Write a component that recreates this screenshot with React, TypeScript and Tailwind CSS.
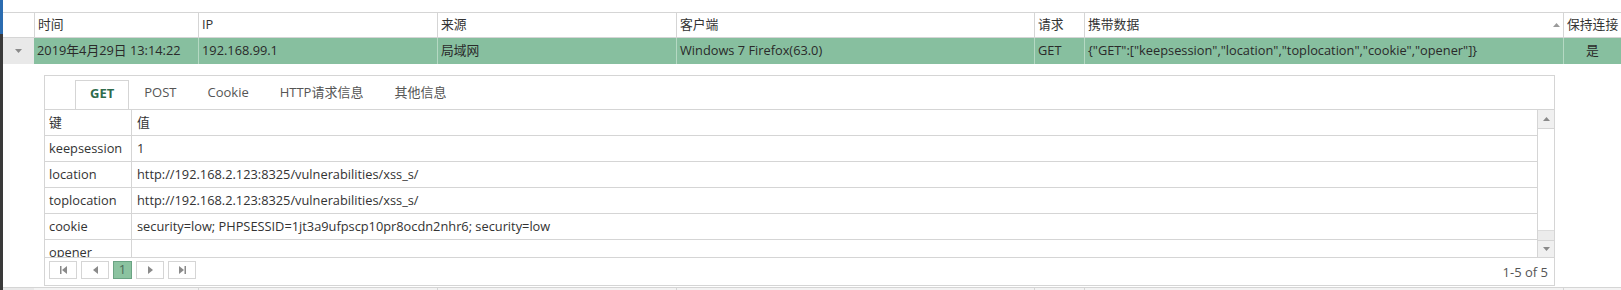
const font = { fontFamily: '"Open Sans", "Noto Sans CJK SC", sans-serif' };

const columns = ['时间', 'IP', '来源', '客户端', '请求', '携带数据', '保持连接'];
const gridCols = 'grid grid-cols-[31px_164px_239px_239px_358px_50px_479px_1fr]';

const detailRows = [
  ['keepsession', '1'],
  ['location', 'http://192.168.2.123:8325/vulnerabilities/xss_s/'],
  ['toplocation', 'http://192.168.2.123:8325/vulnerabilities/xss_s/'],
  ['cookie', 'security=low; PHPSESSID=1jt3a9ufpscp10pr8ocdn2nhr6; security=low'],
  ['opener', ''],
];

const tabs = ['GET', 'POST', 'Cookie', 'HTTP请求信息', '其他信息'];

function PagerButton({ children }: { children: React.ReactNode }) {
  return (
    <div className="w-[28px] h-[18px] border border-[#d5d5d5] bg-white flex items-center justify-center text-[#7a7a7a]">
      {children}
    </div>
  );
}

function DetailPanel() {
  return (
    <div className="border border-[#d5d5d5] bg-white h-[211px] flex flex-col">
      {/* Tabs */}
      <div className="h-[33px] flex items-end pl-[30px]">
        {tabs.map((t, i) => (
          <div
            key={t}
            className={
              i === 0
                ? 'h-[29px] px-[14px] pb-[3px] flex items-center border border-b-0 border-[#d5d5d5] bg-white font-bold text-[#2f6b4c] text-[13px]'
                : 'h-[29px] px-[15px] pb-[3px] flex items-center text-[#555] text-[13px] mr-[1px]'
            }
          >
            {t}
          </div>
        ))}
      </div>

      {/* Grid */}
      <div className="flex border-t border-[#d5d5d5] h-[148px]">
        <div className="flex-1 flex flex-col overflow-hidden">
          <div className="flex h-[26px] border-b border-[#d5d5d5] shrink-0">
            <div className="w-[87px] pl-[4px] flex items-center border-r border-[#d5d5d5]">键</div>
            <div className="flex-1 pl-[5px] flex items-center">值</div>
          </div>
          {detailRows.map(([k, v]) => (
            <div key={k} className="flex h-[26px] border-b border-[#d5d5d5] shrink-0">
              <div className="w-[87px] pl-[4px] flex items-center border-r border-[#d5d5d5]">{k}</div>
              <div className="flex-1 pl-[5px] flex items-center">{v}</div>
            </div>
          ))}
        </div>
        {/* Scrollbar */}
        <div className="w-[17px] border-l border-[#d5d5d5] flex flex-col bg-[#f7f7f7]">
          <div className="h-[19px] flex items-center justify-center border-b border-[#d5d5d5] bg-[#f0f0f0]">
            <svg width="7" height="4" viewBox="0 0 7 4"><path d="M0 4 L3.5 0 L7 4 Z" fill="#8a8a8a" /></svg>
          </div>
          <div className="h-[102px] bg-white border-b border-[#dcdcdc]"></div>
          <div className="flex-1 bg-[#ececec]"></div>
          <div className="h-[17px] flex items-center justify-center border-t border-[#d5d5d5] bg-[#f0f0f0]">
            <svg width="7" height="4" viewBox="0 0 7 4"><path d="M0 0 L3.5 4 L7 0 Z" fill="#8a8a8a" /></svg>
          </div>
        </div>
      </div>

      {/* Pager */}
      <div className="flex-1 border-t border-[#d5d5d5] flex items-start pt-[3px] pl-[4px] pr-[6px]">
        <div className="flex gap-[4px]">
          <PagerButton>
            <svg width="7" height="8" viewBox="0 0 7 8"><rect x="0" y="0" width="1.5" height="8" fill="#8a8a8a" /><path d="M7 0 L2 4 L7 8 Z" fill="#8a8a8a" /></svg>
          </PagerButton>
          <PagerButton>
            <svg width="5" height="8" viewBox="0 0 5 8"><path d="M5 0 L0 4 L5 8 Z" fill="#8a8a8a" /></svg>
          </PagerButton>
          <div className="w-[19px] h-[18px] border border-[#6aa383] bg-[#8bc3a0] flex items-center justify-center text-[#4d6b5a] text-[13px]">1</div>
          <PagerButton>
            <svg width="5" height="8" viewBox="0 0 5 8"><path d="M0 0 L5 4 L0 8 Z" fill="#8a8a8a" /></svg>
          </PagerButton>
          <PagerButton>
            <svg width="7" height="8" viewBox="0 0 7 8"><path d="M0 0 L5 4 L0 8 Z" fill="#8a8a8a" /><rect x="5.5" y="0" width="1.5" height="8" fill="#8a8a8a" /></svg>
          </PagerButton>
        </div>
        <div className="ml-auto self-center text-[#555] text-[13px]">1-5 of 5</div>
      </div>
    </div>
  );
}

export default function App() {
  return (
    <div className="w-[1621px] h-[290px] overflow-hidden bg-white flex text-[12.8px] text-[#333]" style={font}>
      <div className="w-[3px] flex flex-col">
        <div className="h-[34px] bg-[#2b6cb0]"></div>
        <div className="flex-1 bg-[#3a3a3a]"></div>
      </div>
      <div className="flex-1 pt-[12px]">
        {/* Header */}
        <div className={`${gridCols} h-[26px] border-t border-b border-[#d5d5d5]`}>
          <div></div>
          {columns.map((c, i) => (
            <div key={c} className="border-l border-[#d5d5d5] pl-[3px] flex items-center whitespace-nowrap overflow-hidden">
              {c}
              {i === 5 && (
                <svg className="ml-auto mr-[3px]" width="7" height="4" viewBox="0 0 7 4"><path d="M0 4 L3.5 0 L7 4 Z" fill="#9a9a9a" /></svg>
              )}
            </div>
          ))}
        </div>

        {/* Master row */}
        <div className={`${gridCols} h-[26px] text-[#2a2a2a]`}>
          <div className="bg-[#e9e9e9] flex items-center justify-center">
            <svg width="7" height="4" viewBox="0 0 7 4"><path d="M0 0 L3.5 4 L7 0 Z" fill="#8a8a8a" /></svg>
          </div>
          <div className="bg-[#87bf9f] pl-[3px] flex items-center">2019年4月29日 13:14:22</div>
          <div className="bg-[#87bf9f] border-l border-[#b5d9c3] pl-[3px] flex items-center">192.168.99.1</div>
          <div className="bg-[#87bf9f] border-l border-[#b5d9c3] pl-[3px] flex items-center">局域网</div>
          <div className="bg-[#87bf9f] border-l border-[#b5d9c3] pl-[3px] flex items-center">Windows 7 Firefox(63.0)</div>
          <div className="bg-[#87bf9f] border-l border-[#b5d9c3] pl-[3px] flex items-center">GET</div>
          <div className="bg-[#87bf9f] border-l border-[#b5d9c3] pl-[3px] flex items-center whitespace-nowrap">
            {'{"GET":["keepsession","location","toplocation","cookie","opener"]}'}
          </div>
          <div className="bg-[#87bf9f] border-l border-[#b5d9c3] flex items-center justify-center">是</div>
        </div>

        {/* Detail row */}
        <div className="flex h-[223px]">
          <div className="w-[31px]"></div>
          <div className="w-[1529px] pl-[10px] pr-[8px] pt-[11px]">
            <DetailPanel />
          </div>
        </div>

        {/* Next master row */}
        <div className={`${gridCols} h-[26px] border-t border-[#d5d5d5]`}>
          <div className="bg-[#e9e9e9]"></div>
          <div className="bg-[#f3f3f3]"></div>
          <div className="bg-[#f3f3f3] border-l border-[#d5d5d5]"></div>
          <div className="bg-[#f3f3f3] border-l border-[#d5d5d5]"></div>
          <div className="bg-[#f3f3f3] border-l border-[#d5d5d5]"></div>
          <div className="bg-[#f3f3f3] border-l border-[#d5d5d5]"></div>
          <div className="bg-[#f3f3f3] border-l border-[#d5d5d5]"></div>
          <div className="bg-[#f3f3f3] border-l border-[#d5d5d5]"></div>
        </div>
      </div>
    </div>
  );
}
